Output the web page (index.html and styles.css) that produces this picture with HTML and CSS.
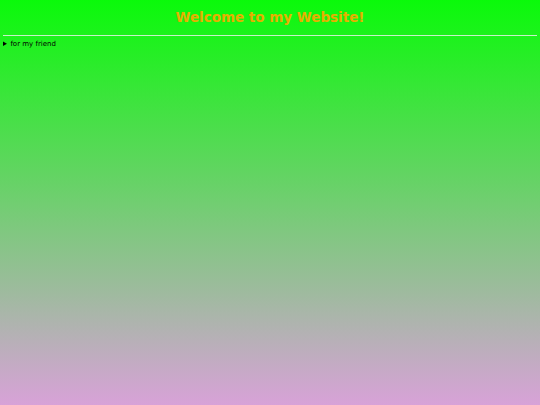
FILE: index.html
```html
<!DOCTYPE html>
<html>
<head>
<meta charset="utf-8">
<link rel="stylesheet" href="styles.css">
</head>
<body>
<h1 class="title">Welcome to my Website!</h1>
<hr class="rule">
<details class="friend">
<summary>for my friend</summary>
</details>
</body>
</html>
```
FILE: styles.css
```css
html {
  min-height: 100%;
  background: linear-gradient(to bottom, #0afa0a, #d8a2d8);
}
body {
  margin: 0;
  padding: 0 3px;
  font-family: "DejaVu Sans", Verdana, sans-serif;
}
.title {
  margin: 0;
  padding-top: 9px;
  height: 26px;
  font-size: 13.5px;
  line-height: 16px;
  text-align: center;
  color: #e6b000;
}
.rule {
  margin: 0;
  border: 0;
  border-top: 1px solid #c8f0c8;
  height: 0;
}
.friend {
  margin-top: 4px;
  font-size: 7px;
  color: #000;
}
.friend summary {
  cursor: pointer;
}
```
